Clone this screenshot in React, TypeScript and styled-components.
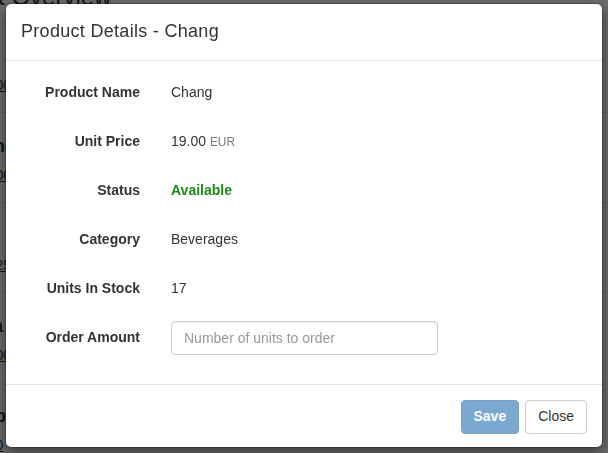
import React from "react";
import styled, { createGlobalStyle } from "styled-components";

const GlobalStyle = createGlobalStyle`
  html, body {
    margin: 0;
    padding: 0;
    background: #fff;
  }
  body {
    font-family: "Liberation Sans", Helvetica, Arial, sans-serif;
    font-size: 14px;
    line-height: 1.42857;
    color: #333;
    overflow: hidden;
  }
  * { box-sizing: border-box; }
`;

/* ---------- background page (under the backdrop) ---------- */

const Page = styled.div`
  width: 608px;
  height: 453px;
  overflow: hidden;
  background: #fff;
`;

const PageHeading = styled.h1`
  margin: -16px 0 0;
  font-size: 24px;
  font-weight: 500;
  line-height: 1.1;
  text-indent: -78px;
  padding-bottom: 12px;
  border-bottom: 1px solid #ddd;
`;

const ProductList = styled.div`
  display: flex;
  flex-direction: column;
`;

const ProductRow = styled.div`
  height: 90px;
  border-bottom: 1px solid #ddd;
  display: flex;
  flex-direction: column;
  justify-content: flex-start;
  padding-top: 21px;
  gap: 6px;
`;

const ProductTitle = styled.div`
  font-size: 18px;
  font-weight: bold;
  text-indent: -40px;
  white-space: nowrap;
`;

const ProductSub = styled.div`
  font-size: 14px;
  text-decoration: underline;
  text-indent: -24px;
`;

/* ---------- modal ---------- */

const Backdrop = styled.div`
  position: fixed;
  inset: 0;
  background: rgba(0, 0, 0, 0.57);
`;

const ModalLayer = styled.div`
  position: fixed;
  inset: 0;
  padding: 3px 5px;
  display: flex;
  align-items: flex-start;
`;

const Dialog = styled.div`
  width: 100%;
  background: #fff;
  border: 1px solid rgba(0, 0, 0, 0.2);
  border-radius: 6px;
  box-shadow: 0 5px 15px rgba(0, 0, 0, 0.5);
  background-clip: padding-box;
`;

const Header = styled.div`
  padding: 15px;
  border-bottom: 1px solid #e5e5e5;
`;

const Title = styled.h4`
  margin: 0;
  font-size: 18px;
  font-weight: 500;
  line-height: 25.7px;
  letter-spacing: 0.3px;
  color: #333;
`;

const Body = styled.div`
  padding: 15px 15px 14px;
`;

const FormGroup = styled.div`
  display: grid;
  grid-template-columns: 25% 50% 25%;
  margin: 0 -15px 15px;
`;

const Label = styled.label`
  padding: 7px 15px 0;
  text-align: right;
  font-weight: bold;
  color: #333;
`;

const Value = styled.div<{ $tone?: "ok" }>`
  padding: 7px 15px 7px 16px;
  min-height: 34px;
  font-weight: ${(p) => (p.$tone === "ok" ? "bold" : "normal")};
  color: ${(p) => (p.$tone === "ok" ? "#1d8a1d" : "#333")};
`;

const Unit = styled.small`
  font-size: 85%;
  color: #777;
`;

const InputCol = styled.div`
  padding: 0 15px 0 16px;
`;

const Input = styled.input`
  display: block;
  width: 100%;
  height: 34px;
  padding: 6px 12px;
  font-family: inherit;
  font-size: 14px;
  line-height: 1.42857;
  color: #555;
  background: #fff;
  border: 1px solid #ccc;
  border-radius: 4px;
  box-shadow: inset 0 1px 1px rgba(0, 0, 0, 0.075);
  outline: none;
  &::placeholder {
    color: #999;
  }
`;

const Footer = styled.div`
  padding: 15px 15px 13px;
  border-top: 1px solid #e5e5e5;
  display: flex;
  justify-content: flex-end;
  gap: 6px;
`;

const Button = styled.button<{ $primary?: boolean }>`
  height: 34px;
  padding: 6px 12px;
  font-family: inherit;
  font-size: 14px;
  line-height: 1.42857;
  border-radius: 4px;
  border: 1px solid ${(p) => (p.$primary ? "#2e6da4" : "#ccc")};
  background: ${(p) => (p.$primary ? "#337ab7" : "#fff")};
  color: ${(p) => (p.$primary ? "#fff" : "#333")};
  font-weight: ${(p) => (p.$primary ? "bold" : "normal")};
  cursor: pointer;
  &:disabled {
    opacity: 0.65;
    cursor: not-allowed;
  }
`;

const products = [
  { title: "Chai", sub: "18.00" },
  { title: "Chang", sub: "19.00" },
  { title: "Tofu", sub: "23.25" },
  { title: "Ikura", sub: "31.00" },
  { title: "Konbu", sub: "6.00" },
];

export default function App() {
  return (
    <>
      <GlobalStyle />
      <Page>
        <PageHeading>Product Overview</PageHeading>
        <ProductList>
          {products.map((p) => (
            <ProductRow key={p.title}>
              <ProductTitle>{p.title}</ProductTitle>
              <ProductSub>{p.sub}</ProductSub>
            </ProductRow>
          ))}
        </ProductList>
      </Page>
      <Backdrop />
      <ModalLayer>
        <Dialog>
          <Header>
            <Title>Product Details - Chang</Title>
          </Header>
          <Body>
            <FormGroup>
              <Label>Product Name</Label>
              <Value>Chang</Value>
            </FormGroup>
            <FormGroup>
              <Label>Unit Price</Label>
              <Value>
                19.00 <Unit>EUR</Unit>
              </Value>
            </FormGroup>
            <FormGroup>
              <Label>Status</Label>
              <Value $tone="ok">Available</Value>
            </FormGroup>
            <FormGroup>
              <Label>Category</Label>
              <Value>Beverages</Value>
            </FormGroup>
            <FormGroup>
              <Label>Units In Stock</Label>
              <Value>17</Value>
            </FormGroup>
            <FormGroup>
              <Label>Order Amount</Label>
              <InputCol>
                <Input type="number" placeholder="Number of units to order" />
              </InputCol>
            </FormGroup>
          </Body>
          <Footer>
            <Button $primary disabled>
              Save
            </Button>
            <Button>Close</Button>
          </Footer>
        </Dialog>
      </ModalLayer>
    </>
  );
}
